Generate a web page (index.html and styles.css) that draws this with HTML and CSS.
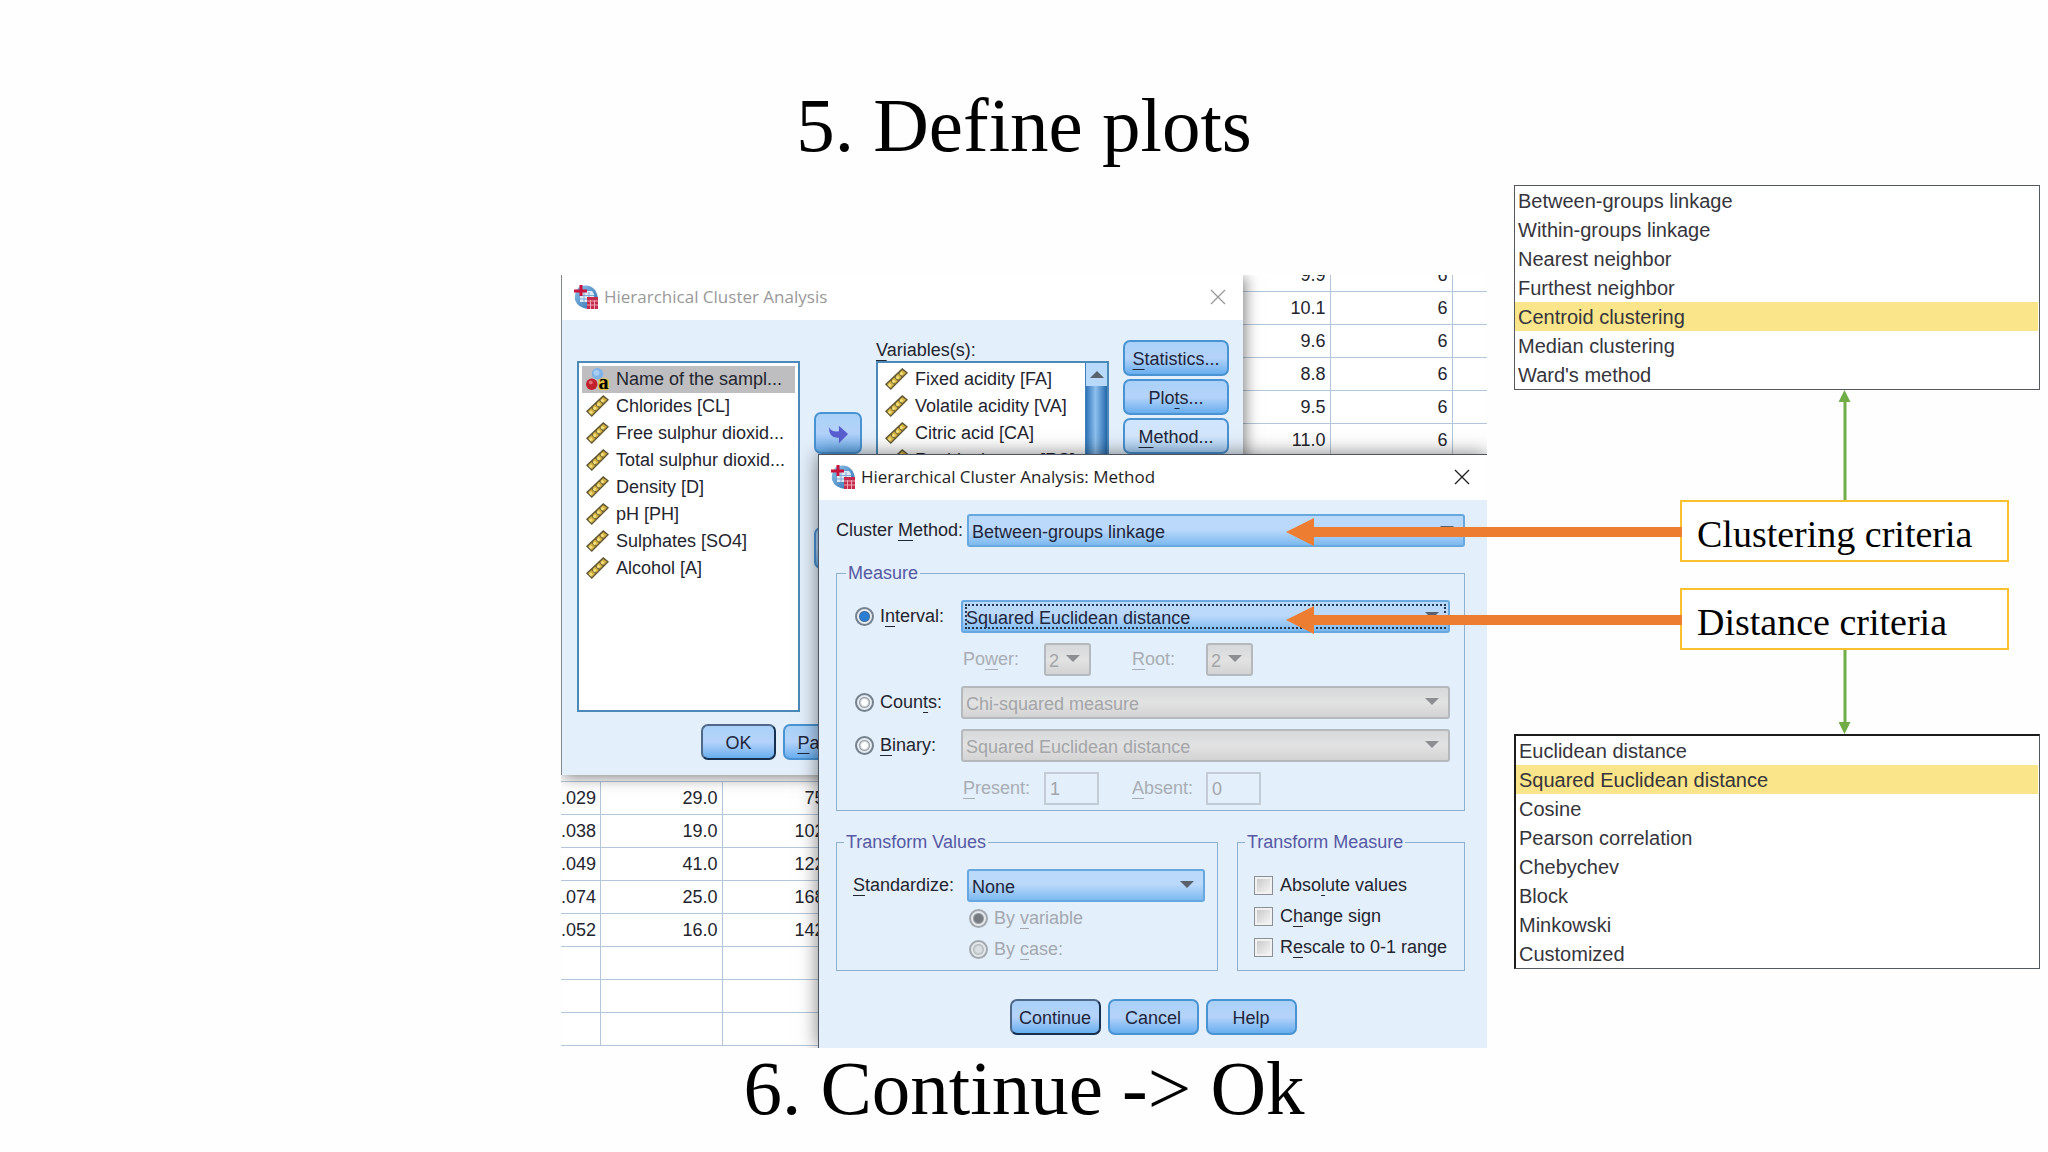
FILE: index.html
```html
<!DOCTYPE html>
<html lang="en">
<head>
  <title>Define plots</title>
  <meta charset="UTF-8">
  <link rel="stylesheet" href="styles.css">
</head>
<body>
  <!-- shared icons -->
  <svg class="sprite" aria-hidden="true">
    <defs>
      <linearGradient id="globe" x1="0" y1="0" x2="1" y2="1">
        <stop offset="0" stop-color="#8fc3ea"/>
        <stop offset="1" stop-color="#2a6db0"/>
      </linearGradient>
    </defs>
    <symbol id="app" viewBox="0 0 24 24">
      <path d="M5 2Q15-2 21 5Q24 9 24 16V22L14 24Q4 23 1 15Q0 7 5 2Z" fill="url(#globe)"/>
      <path d="M6 6H18L20 9V17H6Z" fill="#dce9f6"/>
      <path d="M6 10.500H20M6 14H20M10 7V17M15 7V17" stroke="#7fa9d4"/>
      <path d="M7 0V11M0 6H13" stroke="#c8143c" stroke-width="3"/>
      <rect x="13" y="12" width="11" height="12" fill="#c42a4c"/>
      <path d="M13 16H24M13 20H24M16.500 15V24M20.500 15V24" stroke="#f0a5b5"/>
    </symbol>
    <symbol id="ruler" viewBox="0 0 24 24">
      <path d="M0 17L18 0L24 5L6 23Z" fill="#5c5433"/>
      <path d="M2 17L18 2L22 5L6 21Z" fill="#d3b040"/>
      <path d="M6 13L10 17M10 9L14 13M14 5L18 9" stroke="#5c5433" stroke-width="1.500"/>
      <path d="M4 17L6 19M8 13L10 15M12 9L14 11M16 5L18 7" stroke="#f2e07c" stroke-width="3"/>
    </symbol>
    <symbol id="nominal" viewBox="0 0 24 24">
      <circle cx="12" cy="6" r="6" fill="#7fb2e6"/>
      <circle cx="11" cy="5" r="3" fill="#a9cdf1"/>
      <circle cx="6" cy="17" r="6" fill="#c3202e"/>
      <circle cx="5" cy="15" r="2" fill="#e2707a"/>
      <rect x="13" y="11" width="11" height="12" rx="3" fill="#e3c33c"/>
      <text x="13" y="22" font-family="Liberation Serif, serif" font-weight="bold" font-size="21">a</text>
    </symbol>
    <symbol id="move" viewBox="0 0 24 24">
      <path d="M2 4Q4 10 13 9V3L23 12L13 22V16Q2 17 2 4Z" fill="#5a5fd0"/>
    </symbol>
    <symbol id="close" viewBox="0 0 16 16">
      <path d="M1 1L15 15M15 1L1 15" stroke="currentColor" stroke-width="1.300" fill="none"/>
    </symbol>
  </svg>

  <h1 class="title">5. Define plots</h1>

  <main class="stage">
    <div class="desktop">
      <div class="sheet">
        <table class="cells">
          <colgroup><col><col class="col"><col class="col"><col class="col-last"></colgroup>
          <tr><td></td><td>9.9</td><td>6</td><td></td></tr>
          <tr><td></td><td>10.1</td><td>6</td><td></td></tr>
          <tr><td></td><td>9.6</td><td>6</td><td></td></tr>
          <tr><td></td><td>8.8</td><td>6</td><td></td></tr>
          <tr><td></td><td>9.5</td><td>6</td><td></td></tr>
          <tr><td></td><td>11.0</td><td>6</td><td></td></tr>
        </table>
        <table class="cells">
          <colgroup><col class="col-first"><col class="col"><col class="col"><col></colgroup>
          <tr><td>.029</td><td>29.0</td><td>75.0</td><td></td></tr>
          <tr><td>.038</td><td>19.0</td><td>102.0</td><td></td></tr>
          <tr><td>.049</td><td>41.0</td><td>122.0</td><td></td></tr>
          <tr><td>.074</td><td>25.0</td><td>168.0</td><td></td></tr>
          <tr><td>.052</td><td>16.0</td><td>142.0</td><td></td></tr>
          <tr><td></td><td></td><td></td><td></td></tr>
          <tr><td></td><td></td><td></td><td></td></tr>
          <tr><td></td><td></td><td></td><td></td></tr>
        </table>
      </div>

      <section class="window window-main">
        <header class="titlebar inactive">
          <svg class="app-icon"><use href="#app"/></svg>
          <span>Hierarchical Cluster Analysis</span>
          <button class="close" aria-label="Close"><svg><use href="#close"/></svg></button>
        </header>
        <div class="picker">
          <ul class="vars source">
            <li class="selected"><svg><use href="#nominal"/></svg>Name of the sampl...</li>
            <li><svg><use href="#ruler"/></svg>Chlorides [CL]</li>
            <li><svg><use href="#ruler"/></svg>Free sulphur dioxid...</li>
            <li><svg><use href="#ruler"/></svg>Total sulphur dioxid...</li>
            <li><svg><use href="#ruler"/></svg>Density [D]</li>
            <li><svg><use href="#ruler"/></svg>pH [PH]</li>
            <li><svg><use href="#ruler"/></svg>Sulphates [SO4]</li>
            <li><svg><use href="#ruler"/></svg>Alcohol [A]</li>
          </ul>
          <div class="movers">
            <button class="btn" aria-label="Move to variables"><svg><use href="#move"/></svg></button>
            <button class="btn" aria-label="Move to labels"><svg><use href="#move"/></svg></button>
          </div>
          <div class="vars-label"><u>V</u>ariables(s):</div>
          <div class="target">
            <ul class="vars">
              <li><svg><use href="#ruler"/></svg>Fixed acidity [FA]</li>
              <li><svg><use href="#ruler"/></svg>Volatile acidity [VA]</li>
              <li><svg><use href="#ruler"/></svg>Citric acid [CA]</li>
              <li><svg><use href="#ruler"/></svg>Residual sugar [RS]</li>
            </ul>
            <div class="scroll"><span class="scroll-up"></span></div>
          </div>
          <div class="side">
            <button class="btn"><span><u>S</u>tatistics...</span></button>
            <button class="btn"><span>Plo<u>t</u>s...</span></button>
            <button class="btn light"><span><u>M</u>ethod...</span></button>
          </div>
        </div>
        <footer class="actions">
          <button class="btn default">OK</button>
          <button class="btn"><span><u>P</u>aste</span></button>
          <button class="btn">Reset</button>
          <button class="btn">Cancel</button>
          <button class="btn">Help</button>
        </footer>
      </section>

      <section class="window window-method">
        <header class="titlebar">
          <svg class="app-icon"><use href="#app"/></svg>
          <span>Hierarchical Cluster Analysis: Method</span>
          <button class="close" aria-label="Close"><svg><use href="#close"/></svg></button>
        </header>
        <form class="method">
          <div class="row">
            <label class="method-label" for="method">Cluster <u>M</u>ethod:</label>
            <div class="combo"><select id="method"><option>Between-groups linkage</option></select></div>
          </div>

          <fieldset class="measure">
            <legend>Measure</legend>
            <label class="choice"><input type="radio" name="measure" checked><span>I<u>n</u>terval:</span></label>
            <div class="combo focused"><select aria-label="Interval measure"><option>Squared Euclidean distance</option></select></div>
            <div class="params">
              <label for="power">Po<u>w</u>er:</label>
              <div class="combo small"><select id="power" disabled><option>2</option></select></div>
              <label for="root"><u>R</u>oot:</label>
              <div class="combo small"><select id="root" disabled><option>2</option></select></div>
            </div>
            <label class="choice"><input type="radio" name="measure"><span>Coun<u>t</u>s:</span></label>
            <div class="combo"><select aria-label="Counts measure" disabled><option>Chi-squared measure</option></select></div>
            <label class="choice"><input type="radio" name="measure"><span><u>B</u>inary:</span></label>
            <div class="combo"><select aria-label="Binary measure" disabled><option>Squared Euclidean distance</option></select></div>
            <div class="params">
              <label for="present"><u>P</u>resent:</label>
              <input type="text" id="present" value="1" disabled>
              <label for="absent"><u>A</u>bsent:</label>
              <input type="text" id="absent" value="0" disabled>
            </div>
          </fieldset>

          <div class="transforms">
            <fieldset class="values">
              <legend>Transform Values</legend>
              <div class="row">
                <label class="std-label" for="std"><u>S</u>tandardize:</label>
                <div class="combo"><select id="std"><option>None</option></select></div>
              </div>
              <label class="choice"><input type="radio" name="by" checked disabled><span>By <u>v</u>ariable</span></label>
              <label class="choice"><input type="radio" name="by" disabled><span>By <u>c</u>ase:</span></label>
            </fieldset>
            <fieldset class="checks">
              <legend>Transform Measure</legend>
              <label class="choice"><input type="checkbox"><span>Abso<u>l</u>ute values</span></label>
              <label class="choice"><input type="checkbox"><span>C<u>h</u>ange sign</span></label>
              <label class="choice"><input type="checkbox"><span>R<u>e</u>scale to 0-1 range</span></label>
            </fieldset>
          </div>
        </form>
        <footer class="actions">
          <button class="btn default">Continue</button>
          <button class="btn">Cancel</button>
          <button class="btn">Help</button>
        </footer>
      </section>
    </div>

    <aside class="notes">
      <ul class="options">
        <li>Between-groups linkage</li>
        <li>Within-groups linkage</li>
        <li>Nearest neighbor</li>
        <li>Furthest neighbor</li>
        <li class="picked">Centroid clustering</li>
        <li>Median clustering</li>
        <li>Ward's method</li>
      </ul>
      <div class="callouts">
        <div class="link up"></div>
        <div class="callout">Clustering criteria<span class="pointer"></span></div>
        <div class="callout">Distance criteria<span class="pointer"></span></div>
        <div class="link down"></div>
      </div>
      <ul class="options dark">
        <li>Euclidean distance</li>
        <li class="picked">Squared Euclidean distance</li>
        <li>Cosine</li>
        <li>Pearson correlation</li>
        <li>Chebychev</li>
        <li>Block</li>
        <li>Minkowski</li>
        <li>Customized</li>
      </ul>
    </aside>
  </main>

  <h2 class="title">6. Continue -&gt; Ok</h2>
</body>
</html>
```

FILE: styles.css
```css
* {
  box-sizing: border-box;
}
body {
  margin: 0;
  padding-top: 85px;
  background-color: #fefefe;
  color: #000000;
  font-family: "Liberation Serif", "Times New Roman", serif;
}
ul {
  list-style: none;
  margin: 0;
  padding: 0;
}
u {
  text-decoration-thickness: 1px;
  text-underline-offset: 4px;
  text-decoration-skip-ink: none;
}
.sprite {
  position: absolute;
  width: 0;
  height: 0;
}
.title {
  margin: 0;
  font-size: 77px;
  font-weight: normal;
  line-height: 80px;
  text-align: center;
  font-variant-ligatures: none;
}
.stage {
  display: grid;
  grid-template-columns: 561fr 926fr 27fr 526fr 8fr;
  align-items: start;
  margin-top: 20px;
}

/* Desktop with the data sheet and both dialogs */
.desktop {
  grid-column: 2;
  position: relative;
  height: 773px;
  margin-top: 90px;
  overflow: hidden;
  background-color: #ffffff;
  color: #23252e;
  font-family: "Liberation Sans", Arial, sans-serif;
  font-size: 18px;
}
.sheet {
  height: 100%;
  display: flex;
  flex-direction: column;
  justify-content: space-between;
  padding-bottom: 2px;
}
.cells {
  width: 100%;
  table-layout: fixed;
  border-collapse: collapse;
}
.cells:first-child {
  margin-top: -17px;
}
.cells td {
  height: 33px;
  padding: 0 4px 0 0;
  border: 1px solid #b4c6da;
  border-left: none;
  text-align: right;
}
.cells td:last-child {
  border-right: none;
}
.col {
  width: 122px;
}
.col-first {
  width: 39px;
}
.col-last {
  width: 35px;
}

.window {
  position: absolute;
  background-color: #e3effb;
}
.window-main {
  top: 0;
  left: 0;
  width: 682px;
  border-left: 1px solid #85878f;
  box-shadow: 2px 2px 14px rgba(0, 0, 0, 0.5);
}
.window-method {
  top: 179px;
  left: 257px;
  right: 0;
  bottom: 0;
  border: 1px solid #4f5560;
  border-width: 1px 0 0 1px;
  box-shadow: 0 0 18px rgba(0, 0, 0, 0.5);
}
.titlebar {
  display: flex;
  align-items: center;
  height: 45px;
  padding: 0 17px 2px 12px;
  background-color: #ffffff;
  color: #1e1e1e;
  font-family: "Open Sans", "Segoe UI", sans-serif;
  font-size: 17px;
}
.titlebar.inactive {
  color: #999999;
}
.app-icon {
  width: 24px;
  height: 24px;
  margin-right: 6px;
}
.close {
  display: flex;
  margin-left: auto;
  padding: 0;
  border: none;
  background: none;
  color: inherit;
}
.close svg {
  width: 16px;
  height: 16px;
}

.btn {
  display: flex;
  align-items: center;
  justify-content: center;
  height: 36px;
  padding: 2px 0 0;
  border: 2px solid #4a93d3;
  border-radius: 7px;
  background: linear-gradient(#a9d1f8, #b5d3fa 50%, #68aeee);
  color: #20263a;
  font-family: inherit;
  font-size: 18px;
}
.btn.light {
  background: linear-gradient(#cfe5fd, #d3e6fc 50%, #a9d3f9);
}
.btn.default {
  border-color: #50698a #16304f #16304f #50698a;
}
.actions {
  display: flex;
  justify-content: center;
  gap: 7px;
}
.window-main .actions {
  padding: 12px 0 15px;
}
.window-main .actions .btn {
  width: 75px;
}
.window-method .actions .btn {
  width: 91px;
}

.picker {
  display: grid;
  grid-template-columns: 223px 48px 233px 106px;
  grid-template-rows: 21px 351px;
  column-gap: 14px;
  padding: 20px 15px 0;
}
.vars {
  flex: 1;
  padding: 3px 3px 0;
}
.vars li {
  display: flex;
  align-items: center;
  gap: 7px;
  height: 27px;
  padding-left: 4px;
  white-space: nowrap;
}
.vars svg {
  width: 23px;
  height: 23px;
}
.vars .selected {
  background-color: #bebec0;
}
.source,
.target {
  grid-row: 2;
  border: 2px solid #4b89b8;
  background-color: #ffffff;
}
.movers {
  grid-row: 2;
  display: flex;
  flex-direction: column;
  gap: 73px;
  padding-top: 51px;
}
.movers .btn {
  height: 42px;
}
.movers svg {
  width: 22px;
  height: 22px;
}
.vars-label {
  grid-area: 1 / 3;
  line-height: 20px;
}
.target {
  grid-column: 3;
  display: flex;
}
.scroll {
  width: 22px;
  border-left: 1px solid #3b82bd;
  background: linear-gradient(90deg, #2f74b8, #8ec0ee 45%, #2469ad);
}
.scroll-up {
  display: flex;
  align-items: center;
  justify-content: center;
  height: 23px;
  background-color: #b8d9fa;
}
.scroll-up::before {
  content: "";
  border: 7px solid transparent;
  border-top: none;
  border-bottom: 7px solid #59616c;
}
.side {
  grid-area: 1 / 4 / 3;
  display: flex;
  flex-direction: column;
  gap: 3px;
}

/* Method dialog */
.method {
  padding: 14px 22px 0 17px;
}
.row {
  display: flex;
  align-items: center;
}
.method-label {
  width: 131px;
  white-space: nowrap;
}
.combo {
  position: relative;
  flex: 1;
}
.combo select {
  display: block;
  width: 100%;
  height: 33px;
  padding: 2px 4px 0 3px;
  appearance: none;
  border: 2px solid #66a8df;
  border-radius: 3px;
  outline: none;
  background: linear-gradient(#b9d9fb, #bcd9fb 45%, #7db9f0);
  color: #20263a;
  font-family: inherit;
  font-size: 18px;
}
.combo::after {
  content: "";
  position: absolute;
  top: 12px;
  right: 11px;
  border: 7px solid transparent;
  border-top: 7px solid #59616c;
  border-bottom: none;
}
.combo.focused select {
  outline: 2px dotted #26384f;
  outline-offset: -6px;
}
.combo select:disabled {
  border-color: #b5b9bd;
  background: linear-gradient(#d6d8da, #e2e2e2 50%, #d3d3d3);
  color: #a3a5a8;
  opacity: 1;
}
.combo:has(:disabled)::after {
  border-top-color: #8c8e91;
}
.combo.small {
  flex: none;
  width: 47px;
}

fieldset {
  min-width: 0;
  margin: 0;
  border: 1px solid #8eb0d0;
}
legend {
  margin-left: -9px;
  padding: 0 2px;
  color: #5659a3;
  line-height: 20px;
}
.measure {
  display: grid;
  grid-template-columns: 106px 1fr;
  gap: 10px 0;
  align-items: center;
  margin-top: 16px;
  padding: 17px 14px 5px 18px;
}
.choice {
  display: flex;
  align-items: center;
  gap: 6px;
  white-space: nowrap;
}
.params {
  grid-column: 2;
  display: grid;
  grid-template-columns: 81px 88px 74px 55px;
  align-items: center;
  padding-left: 2px;
  color: #a8adb3;
}
.params input {
  width: 55px;
  height: 33px;
  padding: 2px 4px 0;
  border: 2px solid #c3ccd5;
  background-color: transparent;
  color: #a3a5a8;
  font-family: inherit;
  font-size: 18px;
}
.choice input {
  appearance: none;
  flex: none;
  width: 19px;
  height: 19px;
  margin: 0;
}
input[type="radio"] {
  border: 2px solid #74818f;
  border-radius: 50%;
  background: radial-gradient(circle, #ffffff 3px, #9aa2ab 5px, #e6ebf0 6px);
}
input[type="radio"]:checked {
  background: radial-gradient(circle, #2a7fd4 4px, #3d6f9f 5px, #e6ebf0 6px);
}
input[type="radio"]:disabled {
  border-color: #a3a8ae;
  background: radial-gradient(circle, #d9dee3 3px, #b5babf 5px, #e3e8ec 6px);
}
input[type="radio"]:checked:disabled {
  background: radial-gradient(circle, #777c82 4px, #999ea3 5px, #e3e8ec 6px);
}
input[type="radio"]:disabled + span {
  color: #a3a8ae;
}
.choice input[type="checkbox"] {
  border: 1px solid #8b9096;
  background: linear-gradient(135deg, #c4c4c4, #fafafa);
  box-shadow: inset 0 0 0 2px #f1f1f1;
}
.transforms {
  display: grid;
  grid-template-columns: 382fr 228fr;
  gap: 19px;
  margin-top: 21px;
}
.values {
  padding: 17px 12px 5px 16px;
}
.values .row {
  margin-bottom: 1px;
}
.std-label {
  width: 114px;
}
.values .choice {
  height: 31px;
  margin-left: 116px;
}
.checks {
  padding: 18px 0 0 16px;
}
.checks .choice {
  height: 31px;
  gap: 7px;
}
.window-method .actions {
  padding-top: 28px;
}

/* Notes on the right */
.notes {
  grid-column: 4;
}
.options {
  border: 1px solid #55585c;
  background-color: #ffffff;
  color: #35353b;
  font-family: "Liberation Sans", Arial, sans-serif;
  font-size: 20px;
}
.options.dark {
  border-width: 2px 1px 1px 2px;
  border-color: #1c1c1c #55585c #55585c #1c1c1c;
}
.options li {
  margin-right: 1px;
  padding: 2px 3px 0;
  line-height: 27px;
}
.options .picked {
  background-color: #fae58a;
}
.callouts {
  width: 329px;
  margin: 0 31px 0 auto;
}
.callout {
  position: relative;
  padding: 10px 15px 4px;
  border: 2px solid #fbc02d;
  background-color: #ffffff;
  font-size: 38px;
  line-height: 44px;
}
.callout + .callout {
  margin-top: 26px;
}
/* orange arrow that runs left into the dialog */
.pointer {
  position: absolute;
  top: 16px;
  right: 100%;
  width: 396px;
  height: 28px;
  background-color: #ed7d31;
  clip-path: polygon(0 14px, 28px 0, 28px 9px, 100% 9px, 100% 19px, 28px 19px, 28px 28px);
}
.link {
  width: 12px;
  margin: 0 auto;
  background-color: #70ad47;
}
.link.up {
  height: 110px;
  clip-path: polygon(6px 0, 12px 12px, 8px 12px, 8px 100%, 5px 100%, 5px 12px, 0 12px);
}
.link.down {
  height: 84px;
  clip-path: polygon(5px 0, 8px 0, 8px 72px, 12px 72px, 6px 84px, 0 72px, 5px 72px);
}
```
